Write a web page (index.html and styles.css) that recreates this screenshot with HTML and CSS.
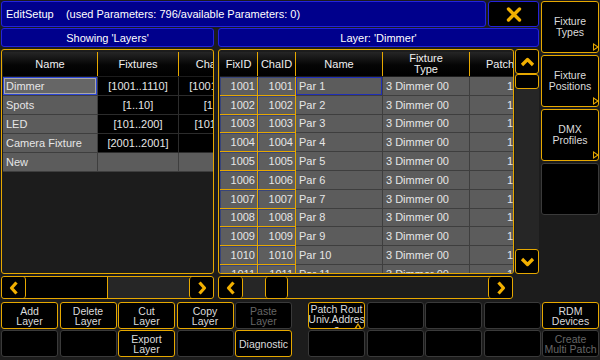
FILE: index.html
```html
<!DOCTYPE html>
<html lang="en">
<head>
    <meta charset="UTF-8">
    <title>EditSetup - Layers</title>
    <link rel="stylesheet" href="styles.css">
</head>
<body>
    <div class="screen">
        <div class="upper">
            <div class="workspace">
                <div class="titlebar">
                    <div class="title">EditSetup&nbsp;&nbsp;&nbsp; (used Parameters: 796/available Parameters: 0)</div>
                    <div class="close">
                        <svg width="16" height="15" viewBox="0 0 16 15">
                            <path d="M2.5 2 L13.5 13 M13.5 2 L2.5 13" stroke="#f2b000" stroke-width="3.4" stroke-linecap="round"/>
                        </svg>
                    </div>
                </div>

                <div class="captions">
                    <div class="caption left-col">Showing 'Layers'</div>
                    <div class="caption right-col">Layer: 'Dimmer'</div>
                </div>

                <div class="panes">
                    <!-- layers list -->
                    <div class="sheet layers">
                        <div class="head">
                            <div class="hcell c-lname">Name</div>
                            <div class="hcell c-fix">Fixtures</div>
                            <div class="hcell c-fix">Channels</div>
                        </div>
                        <div class="line">
                            <div class="cell c-lname gray selected">Dimmer</div>
                            <div class="cell c-fix dark center">[1001..1110]</div>
                            <div class="cell c-fix dark center">[1001..1110]</div>
                        </div>
                        <div class="line">
                            <div class="cell c-lname gray">Spots</div>
                            <div class="cell c-fix dark center">[1..10]</div>
                            <div class="cell c-fix dark center">[1..10]</div>
                        </div>
                        <div class="line">
                            <div class="cell c-lname gray">LED</div>
                            <div class="cell c-fix dark center">[101..200]</div>
                            <div class="cell c-fix dark center">[101..200]</div>
                        </div>
                        <div class="line">
                            <div class="cell c-lname gray">Camera Fixture</div>
                            <div class="cell c-fix dark center">[2001..2001]</div>
                            <div class="cell c-fix dark center"></div>
                        </div>
                        <div class="line">
                            <div class="cell c-lname gray">New</div>
                            <div class="cell c-fix gray"></div>
                            <div class="cell c-fix gray"></div>
                        </div>
                    </div>

                    <!-- fixtures of the selected layer -->
                    <div class="sheet fixtures">
                        <div class="head">
                            <div class="hcell c-id">FixID</div>
                            <div class="hcell c-id">ChaID</div>
                            <div class="hcell c-name">Name</div>
                            <div class="hcell c-type">Fixture<br>Type</div>
                            <div class="hcell c-patch">Patch</div>
                        </div>
                        <div id="fixture-rows"></div>
                    </div>

                    <div class="vscroll">
                        <div class="sbtn">
                            <svg width="15" height="10" viewBox="0 0 15 10"><path d="M2 8 L7.5 2.5 L13 8" fill="none" stroke="#f2b000" stroke-width="3.2" stroke-linejoin="round"/></svg>
                        </div>
                        <div class="vthumb"></div>
                        <div class="vtrack"></div>
                        <div class="sbtn">
                            <svg width="15" height="10" viewBox="0 0 15 10"><path d="M2 2 L7.5 7.5 L13 2" fill="none" stroke="#f2b000" stroke-width="3.2" stroke-linejoin="round"/></svg>
                        </div>
                    </div>
                </div>

                <div class="scrolls">
                    <div class="hscroll left-col">
                        <div class="sbtn arrow">
                            <svg width="10" height="14" viewBox="0 0 10 14"><path d="M7.5 1.5 L2.5 7 L7.5 12.5" fill="none" stroke="#f2b000" stroke-width="3.2" stroke-linejoin="round"/></svg>
                        </div>
                        <div class="hthumb wide"></div>
                        <div class="htrack grow"></div>
                        <div class="sbtn arrow">
                            <svg width="10" height="14" viewBox="0 0 10 14"><path d="M2.5 1.5 L7.5 7 L2.5 12.5" fill="none" stroke="#f2b000" stroke-width="3.2" stroke-linejoin="round"/></svg>
                        </div>
                    </div>
                    <div class="hscroll right-hs">
                        <div class="sbtn arrow">
                            <svg width="10" height="14" viewBox="0 0 10 14"><path d="M7.5 1.5 L2.5 7 L7.5 12.5" fill="none" stroke="#f2b000" stroke-width="3.2" stroke-linejoin="round"/></svg>
                        </div>
                        <div class="htrack lead"></div>
                        <div class="hthumb small"></div>
                        <div class="htrack grow plain"></div>
                        <div class="sbtn arrow">
                            <svg width="10" height="14" viewBox="0 0 10 14"><path d="M2.5 1.5 L7.5 7 L2.5 12.5" fill="none" stroke="#f2b000" stroke-width="3.2" stroke-linejoin="round"/></svg>
                        </div>
                    </div>
                </div>
            </div>

            <div class="sidebar">
                <div class="side-btn on">Fixture<br>Types<span class="flag"></span></div>
                <div class="side-btn on">Fixture<br>Positions<span class="flag"></span></div>
                <div class="side-btn on">DMX<br>Profiles<span class="flag"></span></div>
                <div class="side-btn"></div>
            </div>
        </div>

        <div class="keys">
            <div class="key-group">
                <div class="key on">Add<br>Layer</div>
                <div class="key on">Delete<br>Layer</div>
                <div class="key on">Cut<br>Layer</div>
                <div class="key on">Copy<br>Layer</div>
                <div class="key off">Paste<br>Layer</div>
                <div class="key"></div>
                <div class="key"></div>
                <div class="key on">Export<br>Layer</div>
                <div class="key"></div>
                <div class="key on">Diagnostic</div>
            </div>
            <div class="key-group">
                <div class="key on clip">Patch Rout<br>Univ.Addres<br>s<span class="notch"></span></div>
                <div class="key"></div>
                <div class="key"></div>
                <div class="key"></div>
                <div class="key on">RDM<br>Devices</div>
                <div class="key"></div>
                <div class="key"></div>
                <div class="key"></div>
                <div class="key"></div>
                <div class="key off">Create<br>Multi Patch</div>
            </div>
        </div>
    </div>

    <script>
        // Build the fixture rows of layer 'Dimmer'
        const rows = document.getElementById('fixture-rows');

        for (let i = 1; i <= 12; i++) {
            const id = 1000 + i;
            const line = document.createElement('div');
            line.className = 'line tall';
            line.innerHTML = `
                <div class="cell c-id idcell">${id}</div>
                <div class="cell c-id idcell">${id}</div>
                <div class="cell c-name gray ${i === 1 ? 'picked' : ''}">Par ${i}</div>
                <div class="cell c-type gray">3 Dimmer 00</div>
                <div class="cell c-patch gray right">1</div>
            `;
            rows.appendChild(line);
        }
    </script>
</body>
</html>
```

FILE: styles.css
```css
* {
    margin: 0;
    padding: 0;
    box-sizing: border-box;
}

body {
    width: 600px;
    height: 360px;
    overflow: hidden;
    background: #1c1c1c;
    font-family: 'Liberation Sans', Arial, sans-serif;
    font-size: 11px;
    color: #e6e6e6;
}

.screen {
    padding: 1px 1px 0 1px;
    display: flex;
    flex-direction: column;
    gap: 3px;
}

.upper {
    display: flex;
    gap: 2px;
}

.workspace {
    width: 538px;
    display: flex;
    flex-direction: column;
}

/* title bar */

.titlebar {
    display: flex;
    gap: 2px;
    height: 26px;
}

.title {
    width: 485px;
    background: #00008c;
    border: 1px solid #2323dc;
    border-radius: 3px;
    padding-left: 4px;
    display: flex;
    align-items: center;
    color: #fff;
}

.close {
    flex: 1;
    background: #000;
    border: 1px solid #2323dc;
    border-radius: 3px;
    display: flex;
    align-items: center;
    justify-content: center;
}

.captions {
    display: flex;
    gap: 4px;
    height: 19px;
    margin-top: 1px;
}

.caption {
    background: #00008c;
    border: 1px solid #2323dc;
    border-radius: 3px;
    color: #fff;
    display: flex;
    align-items: center;
    justify-content: center;
}

.left-col {
    width: 213px;
}

.right-col {
    flex: 1;
}

/* tables */

.panes {
    display: flex;
    height: 225px;
    margin-top: 2px;
}

.sheet {
    border: 1px solid #e6a800;
    border-radius: 3px;
    padding: 2px 1px;
    overflow: hidden;
    background: #1c1c1c;
}

.layers {
    width: 213px;
    margin-right: 4px;
}

.fixtures {
    width: 296px;
    margin-right: 1px;
}

.head {
    display: flex;
    height: 24px;
    margin-bottom: 1px;
    white-space: nowrap;
}

.hcell {
    flex: none;
    background: linear-gradient(#262626, #050505 55%, #000);
    border-right: 1px solid #e6a800;
    display: flex;
    align-items: center;
    justify-content: center;
    text-align: center;
    line-height: 11px;
    color: #f0f0f0;
}

.line {
    display: flex;
    height: 19px;
    white-space: nowrap;
}

.line.tall {
    height: 18.8px;
}

.cell {
    flex: none;
    overflow: hidden;
    padding: 0 3px;
    display: flex;
    align-items: center;
    border-right: 1px solid #2c2c2c;
    border-bottom: 1px solid #2c2c2c;
}

.c-lname { width: 95px; }
.c-fix { width: 81px; }
.c-id { width: 38px; }
.c-name { width: 87px; }
.c-type { width: 87px; }
.c-patch { width: 61px; }

.gray {
    background: #5c5c5c;
    border-color: #3e3e3e;
}

.dark {
    background: #000;
}

.center {
    justify-content: center;
}

.right {
    justify-content: flex-end;
    padding-right: 17px;
}

.selected {
    background: #666;
    box-shadow: inset 0 0 0 1px #2b45d6, inset 0 0 0 2px #a8a8a8;
}

.picked {
    box-shadow: inset 0 0 0 1px #1f2fb8;
}

.idcell {
    background: #5e5e5e;
    border-color: #e6a800;
    justify-content: flex-end;
    padding-right: 2px;
    box-shadow: inset 1px 1px 0 #37447a;
}

/* scrollbars */

.vscroll {
    width: 24px;
    display: flex;
    flex-direction: column;
}

.sbtn {
    height: 25px;
    background: #000;
    border: 1px solid #e6a800;
    border-radius: 3px;
    display: flex;
    align-items: center;
    justify-content: center;
    flex: none;
}

.vthumb {
    height: 15px;
    background: #000;
    border: 1px solid #e6a800;
    border-radius: 3px;
}

.vtrack {
    flex: 1;
    background: #262626;
}

.scrolls {
    display: flex;
    gap: 4px;
    height: 23px;
    margin-top: 2px;
}

.hscroll {
    display: flex;
    border: 1px solid #e6a800;
    border-radius: 3px;
    background: #1c1c1c;
}

.right-hs {
    width: 295px;
}

.hscroll .sbtn {
    height: auto;
    width: 24px;
    border-width: 0;
}

.hscroll .sbtn:first-child {
    border-right-width: 1px;
}

.hscroll .sbtn:last-child {
    border-left-width: 1px;
}

.hthumb {
    background: #000;
    border: 1px solid #e6a800;
    border-width: 0 1px;
}

.hthumb.wide {
    width: 82px;
    border-left: 0;
}

.hthumb.small {
    width: 23px;
    border-radius: 3px;
}

.htrack {
    background: #262626;
}

.htrack.grow {
    flex: 1;
}

.htrack.lead {
    width: 22px;
}

.htrack.plain {
    background: #1c1c1c;
}

/* right side buttons */

.sidebar {
    width: 58px;
    display: flex;
    flex-direction: column;
    gap: 2px;
}

.side-btn {
    position: relative;
    height: 52px;
    background: #000;
    border: 1px solid #3a3a3a;
    border-radius: 3px;
    display: flex;
    align-items: center;
    justify-content: center;
    text-align: center;
    font-size: 10.5px;
    line-height: 11px;
    color: #dcdcdc;
}

.side-btn.on {
    border-color: #e6a800;
}

.flag {
    position: absolute;
    right: -1px;
    bottom: 1px;
    width: 0;
    height: 0;
    border-top: 4px solid transparent;
    border-bottom: 4px solid transparent;
    border-left: 6px solid #e6a800;
}

.flag::after {
    content: '';
    position: absolute;
    left: -5px;
    top: -2px;
    border-top: 2px solid transparent;
    border-bottom: 2px solid transparent;
    border-left: 3px solid #000;
}

/* bottom keys */

.keys {
    display: flex;
    justify-content: space-between;
}

.key-group {
    display: grid;
    grid-template-columns: repeat(5, 57px);
    grid-auto-rows: 27px;
    column-gap: 1.5px;
    row-gap: 1px;
}

.key {
    position: relative;
    background: #000;
    border: 1px solid #3a3a3a;
    border-radius: 3px;
    display: flex;
    align-items: center;
    justify-content: center;
    text-align: center;
    font-size: 10.5px;
    line-height: 10px;
    color: #dcdcdc;
}

.key.on {
    border-color: #e6a800;
}

.key.off {
    color: #666;
}

.key.clip {
    align-items: flex-start;
    padding-top: 1px;
    overflow: hidden;
    white-space: nowrap;
}

.notch {
    position: absolute;
    right: 2px;
    bottom: -1px;
    width: 0;
    height: 0;
    border-left: 4px solid transparent;
    border-right: 4px solid transparent;
    border-bottom: 6px solid #e6a800;
}

.notch::after {
    content: '';
    position: absolute;
    left: -2px;
    top: 2px;
    border-left: 2px solid transparent;
    border-right: 2px solid transparent;
    border-bottom: 4px solid #000;
}
```
